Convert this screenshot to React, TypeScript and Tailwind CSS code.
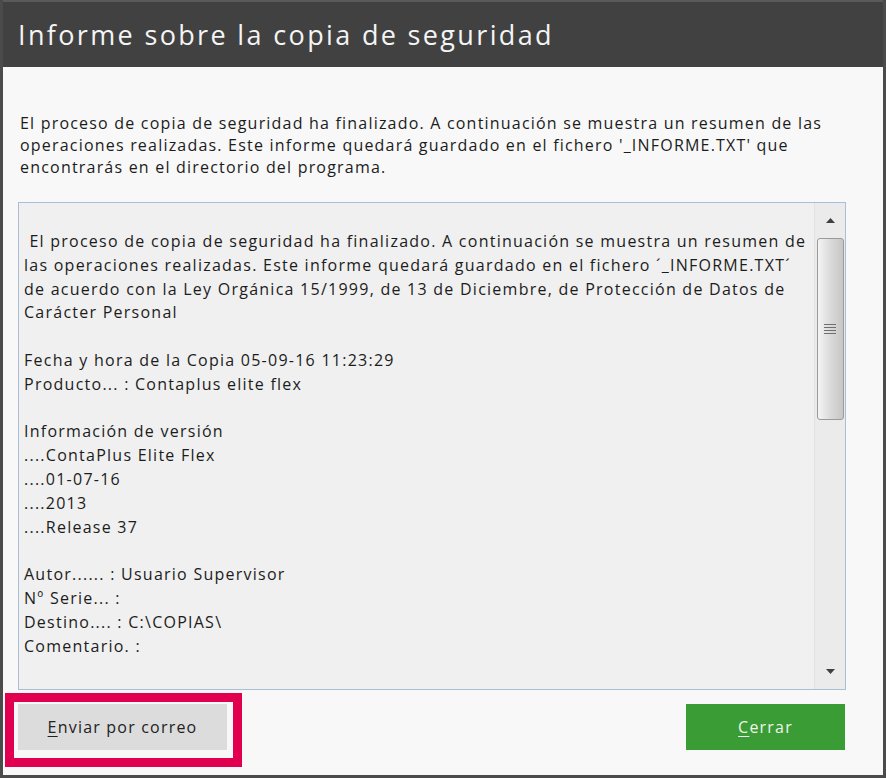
import React from "react";

const intro = [
  "El proceso de copia de seguridad ha finalizado. A continuación se muestra un resumen de las",
  "operaciones realizadas. Este informe quedará guardado en el fichero '_INFORME.TXT' que",
  "encontrarás en el directorio del programa.",
];

const report = [
  " El proceso de copia de seguridad ha finalizado. A continuación se muestra un resumen de",
  "las operaciones realizadas. Este informe quedará guardado en el fichero ´_INFORME.TXT´",
  "de acuerdo con la Ley Orgánica 15/1999, de 13 de Diciembre, de Protección de Datos de",
  "Carácter Personal",
  "",
  "Fecha y hora de la Copia 05-09-16 11:23:29",
  "Producto... : Contaplus elite flex",
  "",
  "Información de versión",
  "....ContaPlus Elite Flex",
  "....01-07-16",
  "....2013",
  "....Release 37",
  "",
  "Autor...... : Usuario Supervisor",
  "Nº Serie... :",
  "Destino.... : C:\\COPIAS\\",
  "Comentario. :",
];

function Scrollbar() {
  return (
    <div className="w-[31px] h-full bg-[#ebebeb] border-l border-[#e2e2e2] flex flex-col items-center">
      <div className="h-[35px] w-full flex items-center justify-center">
        <svg width="9" height="5" viewBox="0 0 9 5">
          <polygon points="0,5 9,5 4.5,0" fill="#404040" />
        </svg>
      </div>
      <div className="w-[27px] h-[182px] rounded-[3px] border border-[#9a9a9a] bg-gradient-to-r from-[#f4f4f4] via-[#dadada] to-[#c6c6c6] flex items-center justify-center">
        <div className="flex flex-col gap-[2px]">
          <div className="w-[12px] h-px bg-[#6f6f6f]" />
          <div className="w-[12px] h-px bg-[#6f6f6f]" />
          <div className="w-[12px] h-px bg-[#6f6f6f]" />
          <div className="w-[12px] h-px bg-[#6f6f6f]" />
        </div>
      </div>
      <div className="flex-1" />
      <div className="h-[35px] w-full flex items-center justify-center">
        <svg width="9" height="5" viewBox="0 0 9 5">
          <polygon points="0,0 9,0 4.5,5" fill="#404040" />
        </svg>
      </div>
    </div>
  );
}

export default function App() {
  return (
    <div className="w-[886px] h-[778px] bg-[#f8f8f8] border-x-[3px] border-b-[3px] border-[#4b4b4b] flex flex-col font-['Open_Sans',sans-serif] text-[#1c1c1c]">
      <div className="h-[67px] shrink-0 bg-[#414141] border-t-2 border-[#5a5a5a] flex items-center pl-[15px] pt-[1px] text-[27px] text-[#f4f4f4] tracking-[2.35px]">
        Informe sobre la copia de seguridad
      </div>

      <div className="pt-[45px] pl-[17px] text-[16px] leading-[22px] tracking-[1.2px]">
        {intro.map((l, i) => (
          <div key={i} className="whitespace-pre">
            {l}
          </div>
        ))}
      </div>

      <div className="mt-[24px] ml-[15px] w-[828px] h-[488px] shrink-0 border border-[#a9bfd6] bg-[#f0f0f0] flex overflow-hidden">
        <div className="flex-1 pt-[27px] pl-[5px] text-[16px] leading-[23.8px] tracking-[1.25px] overflow-hidden">
          {report.map((l, i) => (
            <div key={i} className="whitespace-pre h-[23.8px]">
              {l}
            </div>
          ))}
        </div>
        <Scrollbar />
      </div>

      <div className="mt-[14px] flex items-start justify-between pl-[15px] pr-[38px]">
        <div className="relative">
          <button className="w-[209px] h-[46px] bg-[#dcdcdc] text-[16px] text-[#222] tracking-[1.2px]">
            <span className="underline underline-offset-[3px]">E</span>nviar por correo
          </button>
          <div className="absolute left-[-13px] top-[-11px] w-[237px] h-[74px] border-[9px] border-[#e0004f] pointer-events-none" />
        </div>
        <button className="w-[159px] h-[46px] bg-[#3a9c35] text-[16px] text-[#eef3ee] tracking-[1.2px]">
          <span className="underline underline-offset-[3px]">C</span>errar
        </button>
      </div>
    </div>
  );
}
